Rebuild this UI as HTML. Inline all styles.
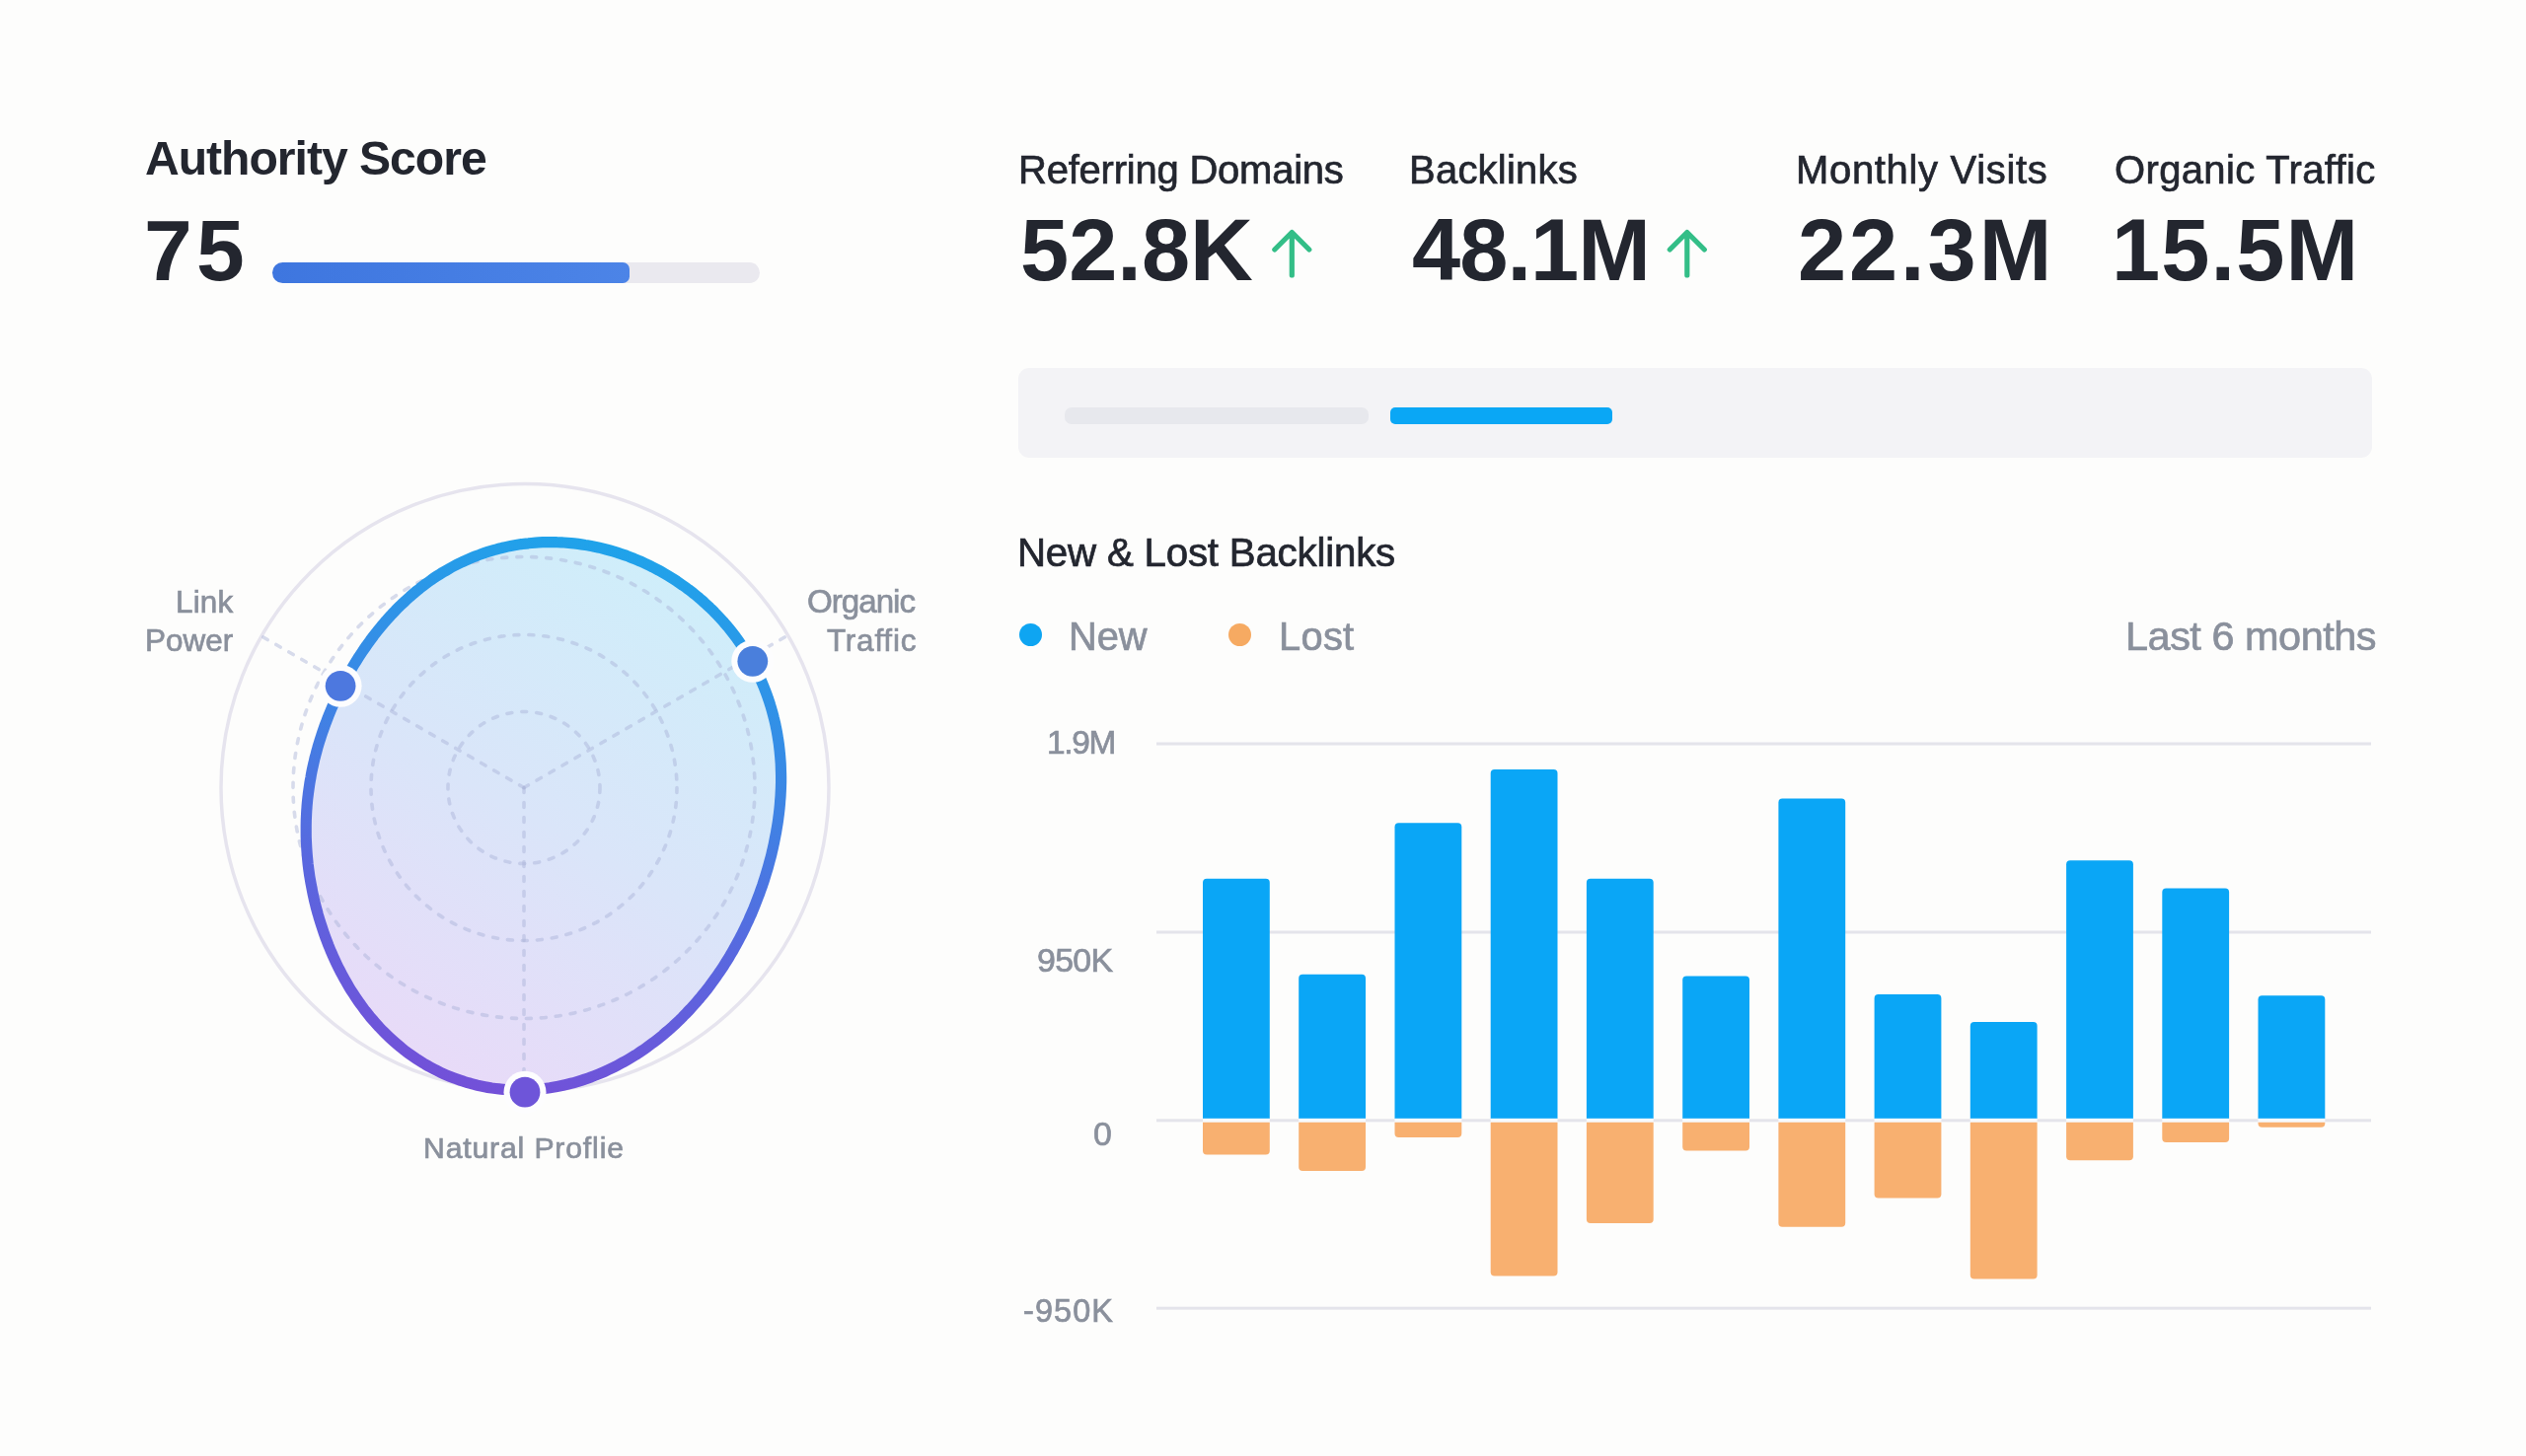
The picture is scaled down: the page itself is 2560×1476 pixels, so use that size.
<!DOCTYPE html>
<html><head><meta charset="utf-8"><style>
html,body{margin:0;padding:0}
body{width:2560px;height:1476px;position:relative;overflow:hidden;background:#fdfdfc;font-family:"Liberation Sans",sans-serif}
.t{position:absolute;white-space:nowrap;font-family:"Liberation Sans",sans-serif;will-change:transform}
.r{position:absolute}
</style></head><body>
<div class="t" style="left:146.5px;top:136.3px;font-size:48.13px;line-height:48.13px;font-weight:700;letter-spacing:-1.02px;color:#23262f">Authority Score</div>
<div class="t" style="left:145.5px;top:210.5px;font-size:87.65px;line-height:87.65px;font-weight:700;letter-spacing:4.29px;color:#23262f">75</div>
<div class="t" style="left:1032.0px;top:151.7px;font-size:39.98px;line-height:39.98px;font-weight:400;letter-spacing:-0.21px;color:#23262f;-webkit-text-stroke:0.7px #23262f">Referring Domains</div>
<div class="t" style="left:1034.0px;top:210.4px;font-size:88.38px;line-height:88.38px;font-weight:700;letter-spacing:0.03px;color:#23262f">52.8K</div>
<div class="t" style="left:1427.5px;top:151.7px;font-size:39.98px;line-height:39.98px;font-weight:400;letter-spacing:0.25px;color:#23262f;-webkit-text-stroke:0.7px #23262f">Backlinks</div>
<div class="t" style="left:1431.0px;top:210.4px;font-size:88.38px;line-height:88.38px;font-weight:700;letter-spacing:-0.95px;color:#23262f">48.1M</div>
<div class="t" style="left:1820.0px;top:151.7px;font-size:39.98px;line-height:39.98px;font-weight:400;letter-spacing:0.69px;color:#23262f;-webkit-text-stroke:0.7px #23262f">Monthly Visits</div>
<div class="t" style="left:1822.0px;top:210.4px;font-size:88.38px;line-height:88.38px;font-weight:700;letter-spacing:2.91px;color:#23262f">22.3M</div>
<div class="t" style="left:2143.0px;top:151.7px;font-size:39.98px;line-height:39.98px;font-weight:400;letter-spacing:0.37px;color:#23262f;-webkit-text-stroke:0.7px #23262f">Organic Traffic</div>
<div class="t" style="left:2140.0px;top:210.4px;font-size:88.38px;line-height:88.38px;font-weight:700;letter-spacing:1.12px;color:#23262f">15.5M</div>
<div class="t" style="left:1031.0px;top:540.7px;font-size:40.26px;line-height:40.26px;font-weight:400;letter-spacing:-0.20px;color:#23262f;-webkit-text-stroke:0.7px #23262f">New &amp; Lost Backlinks</div>
<div class="t" style="left:1083.0px;top:625.8px;font-size:39.83px;line-height:39.83px;font-weight:400;letter-spacing:-0.08px;color:#8a909c;-webkit-text-stroke:0.7px #8a909c">New</div>
<div class="t" style="left:1296.0px;top:625.8px;font-size:39.83px;line-height:39.83px;font-weight:400;letter-spacing:0.30px;color:#8a909c;-webkit-text-stroke:0.7px #8a909c">Lost</div>
<div class="t" style="left:2154.0px;top:623.9px;font-size:41.44px;line-height:41.44px;font-weight:400;letter-spacing:-0.48px;color:#8a909c;-webkit-text-stroke:0.7px #8a909c">Last 6 months</div>
<div class="t" style="left:1060.5px;top:735.7px;font-size:33.43px;line-height:33.43px;font-weight:400;letter-spacing:-1.31px;color:#8a909c;-webkit-text-stroke:0.7px #8a909c">1.9M</div>
<div class="t" style="left:1050.5px;top:956.6px;font-size:33.87px;line-height:33.87px;font-weight:400;letter-spacing:-0.67px;color:#8a909c;-webkit-text-stroke:0.7px #8a909c">950K</div>
<div class="t" style="left:1108.0px;top:1132.6px;font-size:33.87px;line-height:33.87px;font-weight:400;letter-spacing:0.00px;color:#8a909c;-webkit-text-stroke:0.7px #8a909c">0</div>
<div class="t" style="left:1036.5px;top:1312.8px;font-size:32.41px;line-height:32.41px;font-weight:400;letter-spacing:1.11px;color:#8a909c;-webkit-text-stroke:0.7px #8a909c">-950K</div>
<div class="t" style="left:177.5px;top:594.7px;font-size:31.43px;line-height:31.43px;font-weight:400;letter-spacing:0.16px;color:#8a909c;-webkit-text-stroke:0.7px #8a909c">Link</div>
<div class="t" style="left:147.0px;top:633.7px;font-size:31.43px;line-height:31.43px;font-weight:400;letter-spacing:0.05px;color:#8a909c;-webkit-text-stroke:0.7px #8a909c">Power</div>
<div class="t" style="left:818.0px;top:593.2px;font-size:33.16px;line-height:33.16px;font-weight:400;letter-spacing:-1.01px;color:#8a909c;-webkit-text-stroke:0.7px #8a909c">Organic</div>
<div class="t" style="left:838.0px;top:633.7px;font-size:31.43px;line-height:31.43px;font-weight:400;letter-spacing:0.81px;color:#8a909c;-webkit-text-stroke:0.7px #8a909c">Traffic</div>
<div class="t" style="left:428.5px;top:1149.3px;font-size:30.16px;line-height:30.16px;font-weight:400;letter-spacing:0.85px;color:#8a909c;-webkit-text-stroke:0.7px #8a909c">Natural Proflie</div>
<div class="r" style="left:276px;top:265.5px;width:493.5px;height:21.8px;border-radius:10.9px;background:#eae9ef"></div>
<div class="r" style="left:276px;top:265.5px;width:362.3px;height:21.8px;border-radius:10.9px 7px 7px 10.9px;background:linear-gradient(90deg,#3e76df,#4c84e7)"></div>
<svg class="r" style="left:0px;top:0px;overflow:visible" width="1" height="1"><path d="M1309.3 279.0 L1309.3 235.5 M1291.8 253.0 L1309.3 235.5 L1326.8 253.0" stroke="#33be87" stroke-width="5.2" fill="none" stroke-linecap="round" stroke-linejoin="round"/></svg>
<svg class="r" style="left:0px;top:0px;overflow:visible" width="1" height="1"><path d="M1709.8 279.0 L1709.8 235.5 M1692.3 253.0 L1709.8 235.5 L1727.3 253.0" stroke="#33be87" stroke-width="5.2" fill="none" stroke-linecap="round" stroke-linejoin="round"/></svg>
<div class="r" style="left:1032px;top:373px;width:1372px;height:91px;border-radius:11px;background:#f3f3f6"></div>
<div class="r" style="left:1079px;top:413.2px;width:307.7px;height:16.4px;border-radius:7px;background:#e7e8ed"></div>
<div class="r" style="left:1409.2px;top:412.9px;width:224.8px;height:16.9px;border-radius:5px;background:#0aa7f5"></div>
<div class="r" style="left:1032.5px;top:631.5px;width:23px;height:23px;border-radius:50%;background:#0ea5f2"></div>
<div class="r" style="left:1244.5px;top:631.5px;width:23px;height:23px;border-radius:50%;background:#f6aa62"></div>
<svg class="r" style="left:0;top:0" width="2560" height="1476" viewBox="0 0 2560 1476"><rect x="1172" y="752.5" width="1231" height="3" fill="#e4e4eb"/><rect x="1172" y="943.5" width="1231" height="3" fill="#e4e4eb"/><rect x="1172" y="1134.3" width="1231" height="3" fill="#e4e4eb"/><rect x="1172" y="1324.7" width="1231" height="3" fill="#e4e4eb"/><path d="M1219.0 1134 V894.8 Q1219.0 890.8 1223.0 890.8 H1282.8 Q1286.8 890.8 1286.8 894.8 V1134Z" fill="#0aa6f6"/><rect x="1219.0" y="1133.8" width="67.8" height="4" fill="#f7fafd"/><path d="M1219.0 1137.8 V1166.4 Q1219.0 1170.4 1223.0 1170.4 H1282.8 Q1286.8 1170.4 1286.8 1166.4 V1137.8Z" fill="#f8b070"/><path d="M1316.2 1134 V991.7 Q1316.2 987.7 1320.2 987.7 H1380.0 Q1384.0 987.7 1384.0 991.7 V1134Z" fill="#0aa6f6"/><rect x="1316.2" y="1133.8" width="67.8" height="4" fill="#f7fafd"/><path d="M1316.2 1137.8 V1183.0 Q1316.2 1187.0 1320.2 1187.0 H1380.0 Q1384.0 1187.0 1384.0 1183.0 V1137.8Z" fill="#f8b070"/><path d="M1413.5 1134 V838.2 Q1413.5 834.2 1417.5 834.2 H1477.3 Q1481.3 834.2 1481.3 838.2 V1134Z" fill="#0aa6f6"/><rect x="1413.5" y="1133.8" width="67.8" height="4" fill="#f7fafd"/><path d="M1413.5 1137.8 V1149.0 Q1413.5 1153.0 1417.5 1153.0 H1477.3 Q1481.3 1153.0 1481.3 1149.0 V1137.8Z" fill="#f8b070"/><path d="M1510.7 1134 V784.0 Q1510.7 780.0 1514.7 780.0 H1574.5 Q1578.5 780.0 1578.5 784.0 V1134Z" fill="#0aa6f6"/><rect x="1510.7" y="1133.8" width="67.8" height="4" fill="#f7fafd"/><path d="M1510.7 1137.8 V1289.5 Q1510.7 1293.5 1514.7 1293.5 H1574.5 Q1578.5 1293.5 1578.5 1289.5 V1137.8Z" fill="#f8b070"/><path d="M1607.9 1134 V894.8 Q1607.9 890.8 1611.9 890.8 H1671.7 Q1675.7 890.8 1675.7 894.8 V1134Z" fill="#0aa6f6"/><rect x="1607.9" y="1133.8" width="67.8" height="4" fill="#f7fafd"/><path d="M1607.9 1137.8 V1236.0 Q1607.9 1240.0 1611.9 1240.0 H1671.7 Q1675.7 1240.0 1675.7 1236.0 V1137.8Z" fill="#f8b070"/><path d="M1705.2 1134 V993.6 Q1705.2 989.6 1709.2 989.6 H1769.0 Q1773.0 989.6 1773.0 993.6 V1134Z" fill="#0aa6f6"/><rect x="1705.2" y="1133.8" width="67.8" height="4" fill="#f7fafd"/><path d="M1705.2 1137.8 V1162.5 Q1705.2 1166.5 1709.2 1166.5 H1769.0 Q1773.0 1166.5 1773.0 1162.5 V1137.8Z" fill="#f8b070"/><path d="M1802.4 1134 V813.6 Q1802.4 809.6 1806.4 809.6 H1866.2 Q1870.2 809.6 1870.2 813.6 V1134Z" fill="#0aa6f6"/><rect x="1802.4" y="1133.8" width="67.8" height="4" fill="#f7fafd"/><path d="M1802.4 1137.8 V1239.8 Q1802.4 1243.8 1806.4 1243.8 H1866.2 Q1870.2 1243.8 1870.2 1239.8 V1137.8Z" fill="#f8b070"/><path d="M1899.6 1134 V1012.0 Q1899.6 1008.0 1903.6 1008.0 H1963.4 Q1967.4 1008.0 1967.4 1012.0 V1134Z" fill="#0aa6f6"/><rect x="1899.6" y="1133.8" width="67.8" height="4" fill="#f7fafd"/><path d="M1899.6 1137.8 V1210.6 Q1899.6 1214.6 1903.6 1214.6 H1963.4 Q1967.4 1214.6 1967.4 1210.6 V1137.8Z" fill="#f8b070"/><path d="M1996.8 1134 V1040.0 Q1996.8 1036.0 2000.8 1036.0 H2060.6 Q2064.6 1036.0 2064.6 1040.0 V1134Z" fill="#0aa6f6"/><rect x="1996.8" y="1133.8" width="67.8" height="4" fill="#f7fafd"/><path d="M1996.8 1137.8 V1292.5 Q1996.8 1296.5 2000.8 1296.5 H2060.6 Q2064.6 1296.5 2064.6 1292.5 V1137.8Z" fill="#f8b070"/><path d="M2094.1 1134 V876.3 Q2094.1 872.3 2098.1 872.3 H2157.9 Q2161.9 872.3 2161.9 876.3 V1134Z" fill="#0aa6f6"/><rect x="2094.1" y="1133.8" width="67.8" height="4" fill="#f7fafd"/><path d="M2094.1 1137.8 V1172.2 Q2094.1 1176.2 2098.1 1176.2 H2157.9 Q2161.9 1176.2 2161.9 1172.2 V1137.8Z" fill="#f8b070"/><path d="M2191.3 1134 V904.4 Q2191.3 900.4 2195.3 900.4 H2255.1 Q2259.1 900.4 2259.1 904.4 V1134Z" fill="#0aa6f6"/><rect x="2191.3" y="1133.8" width="67.8" height="4" fill="#f7fafd"/><path d="M2191.3 1137.8 V1154.0 Q2191.3 1158.0 2195.3 1158.0 H2255.1 Q2259.1 1158.0 2259.1 1154.0 V1137.8Z" fill="#f8b070"/><path d="M2288.5 1134 V1013.2 Q2288.5 1009.2 2292.5 1009.2 H2352.3 Q2356.3 1009.2 2356.3 1013.2 V1134Z" fill="#0aa6f6"/><rect x="2288.5" y="1133.8" width="67.8" height="4" fill="#f7fafd"/><path d="M2288.5 1137.8 V1138.7 Q2288.5 1142.7 2292.5 1142.7 H2352.3 Q2356.3 1142.7 2356.3 1138.7 V1137.8Z" fill="#f8b070"/><defs><linearGradient id="gf" x1="680" y1="580" x2="400" y2="1080" gradientUnits="userSpaceOnUse"><stop offset="0" stop-color="#cfeefa"/><stop offset="0.5" stop-color="#dae5f9"/><stop offset="1" stop-color="#e9daf8"/></linearGradient><linearGradient id="gs" x1="600" y1="545" x2="470" y2="1105" gradientUnits="userSpaceOnUse"><stop offset="0" stop-color="#1fa3ea"/><stop offset="0.35" stop-color="#3a88e5"/><stop offset="0.66" stop-color="#5868df"/><stop offset="1" stop-color="#7350d8"/></linearGradient></defs><circle cx="532.0" cy="798.5" r="308" fill="none" stroke="#e6e4ee" stroke-width="3.5"/><path d="M310.6 825.0 C310.7 822.9 310.8 820.8 311.0 818.7 C311.1 816.7 311.3 814.6 311.5 812.5 C311.7 810.4 311.9 808.4 312.2 806.3 C312.4 804.2 312.7 802.1 313.0 800.1 C313.3 798.0 313.6 796.0 313.9 793.9 C314.2 791.9 314.6 789.8 315.0 787.8 C315.3 785.7 315.7 783.7 316.1 781.7 C316.5 779.6 317.0 777.6 317.4 775.6 C317.9 773.5 318.4 771.5 318.8 769.5 C319.3 767.5 319.9 765.5 320.4 763.5 C320.9 761.5 321.5 759.5 322.0 757.5 C322.6 755.5 323.2 753.5 323.8 751.5 C324.4 749.5 325.1 747.5 325.7 745.6 C326.4 743.6 327.0 741.6 327.7 739.7 C328.4 737.7 329.1 735.8 329.8 733.8 C330.6 731.9 331.3 729.9 332.1 728.0 C332.8 726.0 333.6 724.1 334.4 722.2 C335.2 720.2 336.0 718.3 336.8 716.4 C337.7 714.5 338.5 712.6 339.4 710.6 C340.2 708.7 341.1 706.8 342.0 704.9 C342.9 703.0 343.9 701.1 344.8 699.3 C345.7 697.4 346.7 695.5 347.7 693.6 C348.7 691.7 349.6 689.9 350.7 688.0 C351.7 686.1 352.7 684.3 353.8 682.4 C354.8 680.6 355.9 678.7 357.0 676.9 C358.0 675.0 359.2 673.2 360.3 671.4 C361.4 669.5 362.6 667.7 363.7 665.9 C364.9 664.1 366.1 662.3 367.3 660.5 C368.5 658.7 369.7 656.9 371.0 655.1 C372.2 653.3 373.5 651.5 374.8 649.8 C376.1 648.0 377.4 646.3 378.7 644.5 C380.1 642.8 381.4 641.0 382.8 639.3 C384.2 637.6 385.6 635.9 387.0 634.1 C388.4 632.4 389.9 630.8 391.3 629.1 C392.8 627.4 394.3 625.7 395.8 624.1 C397.3 622.4 398.9 620.8 400.5 619.2 C402.0 617.6 403.6 615.9 405.2 614.4 C406.8 612.8 408.5 611.2 410.2 609.7 C411.8 608.1 413.5 606.6 415.2 605.1 C416.9 603.5 418.7 602.0 420.4 600.6 C422.2 599.1 424.0 597.7 425.8 596.2 C427.6 594.8 429.4 593.4 431.3 592.0 C433.2 590.6 435.0 589.3 436.9 588.0 C438.8 586.6 440.8 585.3 442.7 584.1 C444.7 582.8 446.7 581.6 448.7 580.3 C450.7 579.1 452.7 577.9 454.7 576.8 C456.8 575.6 458.8 574.5 460.9 573.4 C463.0 572.3 465.1 571.3 467.2 570.3 C469.4 569.2 471.5 568.3 473.7 567.3 C475.8 566.3 478.0 565.4 480.2 564.5 C482.4 563.7 484.6 562.8 486.9 562.0 C489.1 561.2 491.3 560.4 493.6 559.7 C495.9 559.0 498.2 558.3 500.4 557.6 C502.7 557.0 505.0 556.3 507.4 555.8 C509.7 555.2 512.0 554.6 514.3 554.1 C516.7 553.6 519.0 553.2 521.4 552.8 C523.7 552.4 526.1 552.0 528.5 551.6 C530.9 551.3 533.2 551.0 535.6 550.8 C538.0 550.5 540.4 550.3 542.8 550.1 C545.2 549.9 547.6 549.8 550.0 549.7 C552.4 549.6 554.8 549.6 557.2 549.6 C559.6 549.6 562.0 549.6 564.4 549.7 C566.8 549.7 569.2 549.9 571.6 550.0 C574.0 550.2 576.4 550.4 578.8 550.6 C581.2 550.8 583.6 551.1 586.0 551.4 C588.4 551.7 590.8 552.1 593.2 552.5 C595.5 552.8 597.9 553.3 600.3 553.7 C602.6 554.2 605.0 554.7 607.3 555.2 C609.7 555.8 612.0 556.4 614.3 557.0 C616.7 557.6 619.0 558.2 621.3 558.9 C623.6 559.6 625.9 560.3 628.2 561.1 C630.5 561.8 632.7 562.6 635.0 563.4 C637.2 564.3 639.5 565.1 641.7 566.0 C643.9 566.9 646.2 567.8 648.4 568.8 C650.6 569.7 652.7 570.7 654.9 571.7 C657.1 572.8 659.2 573.8 661.4 574.9 C663.5 576.0 665.6 577.1 667.7 578.2 C669.8 579.4 671.9 580.6 673.9 581.8 C676.0 583.0 678.0 584.2 680.1 585.5 C682.1 586.7 684.1 588.0 686.1 589.3 C688.0 590.6 690.0 592.0 691.9 593.4 C693.9 594.7 695.8 596.1 697.7 597.6 C699.6 599.0 701.5 600.4 703.3 601.9 C705.2 603.4 707.0 604.9 708.8 606.4 C710.6 608.0 712.4 609.5 714.1 611.1 C715.9 612.7 717.6 614.3 719.3 615.9 C721.0 617.6 722.7 619.2 724.3 620.9 C726.0 622.6 727.6 624.3 729.2 626.0 C730.8 627.7 732.4 629.4 733.9 631.2 C735.5 633.0 737.0 634.7 738.5 636.5 C739.9 638.3 741.4 640.2 742.8 642.0 C744.3 643.9 745.7 645.7 747.0 647.6 C748.4 649.5 749.7 651.4 751.0 653.3 C752.3 655.2 753.6 657.2 754.9 659.1 C756.1 661.1 757.3 663.0 758.5 665.0 C759.7 667.0 760.8 669.0 762.0 671.0 C763.1 673.0 764.2 675.0 765.2 677.1 C766.3 679.1 767.3 681.2 768.3 683.2 C769.3 685.3 770.3 687.4 771.2 689.5 C772.1 691.5 773.0 693.6 773.9 695.8 C774.7 697.9 775.5 700.0 776.3 702.1 C777.1 704.2 777.9 706.4 778.6 708.5 C779.4 710.6 780.1 712.8 780.7 714.9 C781.4 717.1 782.0 719.3 782.6 721.4 C783.2 723.6 783.8 725.8 784.3 727.9 C784.9 730.1 785.4 732.3 785.9 734.5 C786.3 736.6 786.8 738.8 787.2 741.0 C787.6 743.2 788.0 745.4 788.3 747.6 C788.7 749.7 789.0 751.9 789.3 754.1 C789.6 756.3 789.8 758.5 790.1 760.7 C790.3 762.9 790.5 765.0 790.7 767.2 C790.9 769.4 791.0 771.6 791.2 773.7 C791.3 775.9 791.4 778.1 791.4 780.3 C791.5 782.4 791.6 784.6 791.6 786.7 C791.6 788.9 791.6 791.1 791.6 793.2 C791.5 795.3 791.5 797.5 791.4 799.6 C791.3 801.8 791.2 803.9 791.1 806.0 C791.0 808.2 790.8 810.3 790.6 812.4 C790.5 814.5 790.3 816.6 790.1 818.7 C789.9 820.8 789.6 822.9 789.4 825.0 C789.1 827.1 788.8 829.2 788.6 831.2 C788.3 833.3 788.0 835.4 787.6 837.5 C787.3 839.5 786.9 841.6 786.6 843.6 C786.2 845.7 785.8 847.7 785.4 849.7 C785.0 851.8 784.6 853.8 784.2 855.8 C783.7 857.9 783.3 859.9 782.8 861.9 C782.3 863.9 781.9 865.9 781.4 867.9 C780.9 869.9 780.3 871.9 779.8 873.8 C779.3 875.8 778.7 877.8 778.2 879.8 C777.6 881.7 777.0 883.7 776.4 885.7 C775.8 887.6 775.2 889.6 774.6 891.5 C774.0 893.5 773.3 895.4 772.7 897.3 C772.0 899.3 771.3 901.2 770.6 903.1 C770.0 905.1 769.3 907.0 768.5 908.9 C767.8 910.8 767.1 912.7 766.3 914.6 C765.6 916.5 764.8 918.4 764.1 920.3 C763.3 922.2 762.5 924.1 761.7 926.0 C760.9 927.8 760.0 929.7 759.2 931.6 C758.4 933.5 757.5 935.3 756.6 937.2 C755.7 939.0 754.9 940.9 753.9 942.8 C753.0 944.6 752.1 946.4 751.2 948.3 C750.2 950.1 749.3 952.0 748.3 953.8 C747.3 955.6 746.3 957.4 745.3 959.2 C744.3 961.1 743.3 962.9 742.3 964.7 C741.2 966.5 740.1 968.3 739.1 970.1 C738.0 971.9 736.9 973.6 735.8 975.4 C734.6 977.2 733.5 979.0 732.4 980.7 C731.2 982.5 730.0 984.3 728.8 986.0 C727.6 987.8 726.4 989.5 725.2 991.2 C724.0 993.0 722.7 994.7 721.4 996.4 C720.2 998.2 718.9 999.9 717.6 1001.6 C716.2 1003.3 714.9 1005.0 713.6 1006.6 C712.2 1008.3 710.8 1010.0 709.4 1011.7 C708.0 1013.3 706.6 1015.0 705.2 1016.6 C703.7 1018.3 702.3 1019.9 700.8 1021.5 C699.3 1023.1 697.8 1024.8 696.3 1026.3 C694.8 1027.9 693.2 1029.5 691.7 1031.1 C690.1 1032.7 688.5 1034.2 686.9 1035.8 C685.3 1037.3 683.6 1038.9 682.0 1040.4 C680.3 1041.9 678.6 1043.4 676.9 1044.9 C675.2 1046.3 673.5 1047.8 671.8 1049.3 C670.0 1050.7 668.2 1052.1 666.5 1053.6 C664.7 1055.0 662.9 1056.4 661.0 1057.7 C659.2 1059.1 657.3 1060.5 655.4 1061.8 C653.6 1063.2 651.7 1064.5 649.7 1065.8 C647.8 1067.0 645.9 1068.3 643.9 1069.6 C641.9 1070.8 639.9 1072.0 637.9 1073.2 C635.9 1074.4 633.9 1075.6 631.8 1076.7 C629.7 1077.9 627.7 1079.0 625.6 1080.1 C623.5 1081.2 621.3 1082.3 619.2 1083.3 C617.1 1084.3 614.9 1085.3 612.7 1086.3 C610.6 1087.3 608.4 1088.2 606.1 1089.1 C603.9 1090.0 601.7 1090.9 599.4 1091.7 C597.2 1092.6 594.9 1093.4 592.6 1094.1 C590.3 1094.9 588.0 1095.6 585.7 1096.3 C583.4 1097.0 581.1 1097.7 578.7 1098.3 C576.4 1098.9 574.0 1099.5 571.6 1100.0 C569.3 1100.6 566.9 1101.1 564.5 1101.5 C562.1 1102.0 559.7 1102.4 557.3 1102.8 C554.9 1103.1 552.4 1103.5 550.0 1103.8 C547.6 1104.0 545.1 1104.3 542.7 1104.5 C540.2 1104.7 537.8 1104.8 535.3 1104.9 C532.9 1105.0 530.4 1105.1 528.0 1105.1 C525.5 1105.1 523.0 1105.1 520.6 1105.0 C518.1 1104.9 515.6 1104.8 513.2 1104.6 C510.7 1104.4 508.3 1104.2 505.8 1103.9 C503.4 1103.6 500.9 1103.3 498.5 1103.0 C496.0 1102.6 493.6 1102.2 491.2 1101.7 C488.8 1101.2 486.3 1100.7 483.9 1100.2 C481.5 1099.6 479.1 1099.0 476.8 1098.3 C474.4 1097.7 472.0 1097.0 469.7 1096.2 C467.3 1095.5 465.0 1094.7 462.6 1093.8 C460.3 1093.0 458.0 1092.1 455.7 1091.2 C453.5 1090.3 451.2 1089.3 448.9 1088.3 C446.7 1087.2 444.5 1086.2 442.3 1085.1 C440.1 1084.0 437.9 1082.8 435.7 1081.6 C433.6 1080.5 431.4 1079.2 429.3 1078.0 C427.2 1076.7 425.2 1075.4 423.1 1074.1 C421.0 1072.7 419.0 1071.3 417.0 1069.9 C415.0 1068.5 413.0 1067.1 411.1 1065.6 C409.2 1064.1 407.2 1062.6 405.4 1061.0 C403.5 1059.5 401.6 1057.9 399.8 1056.3 C398.0 1054.7 396.2 1053.1 394.4 1051.4 C392.6 1049.7 390.9 1048.0 389.2 1046.3 C387.5 1044.6 385.8 1042.9 384.2 1041.1 C382.5 1039.3 380.9 1037.6 379.3 1035.7 C377.8 1033.9 376.2 1032.1 374.7 1030.3 C373.2 1028.4 371.7 1026.5 370.2 1024.7 C368.8 1022.8 367.4 1020.9 366.0 1018.9 C364.6 1017.0 363.2 1015.1 361.9 1013.1 C360.5 1011.2 359.2 1009.2 358.0 1007.2 C356.7 1005.3 355.4 1003.3 354.2 1001.3 C353.0 999.3 351.8 997.3 350.7 995.2 C349.5 993.2 348.4 991.2 347.3 989.1 C346.2 987.1 345.1 985.1 344.1 983.0 C343.0 981.0 342.0 978.9 341.0 976.8 C340.0 974.8 339.1 972.7 338.1 970.6 C337.2 968.5 336.3 966.4 335.4 964.4 C334.5 962.3 333.7 960.2 332.8 958.1 C332.0 956.0 331.2 953.9 330.4 951.8 C329.6 949.7 328.9 947.6 328.1 945.5 C327.4 943.4 326.7 941.2 326.0 939.1 C325.3 937.0 324.6 934.9 324.0 932.8 C323.4 930.7 322.7 928.6 322.1 926.4 C321.6 924.3 321.0 922.2 320.4 920.1 C319.9 918.0 319.4 915.9 318.8 913.7 C318.3 911.6 317.9 909.5 317.4 907.4 C316.9 905.2 316.5 903.1 316.1 901.0 C315.7 898.9 315.3 896.8 314.9 894.6 C314.5 892.5 314.2 890.4 313.8 888.3 C313.5 886.2 313.2 884.0 312.9 881.9 C312.6 879.8 312.4 877.7 312.1 875.6 C311.9 873.4 311.7 871.3 311.5 869.2 C311.3 867.1 311.1 865.0 311.0 862.9 C310.8 860.7 310.7 858.6 310.6 856.5 C310.5 854.4 310.4 852.3 310.3 850.2 C310.2 848.1 310.2 846.0 310.2 843.9 C310.2 841.8 310.2 839.7 310.2 837.6 C310.2 835.5 310.3 833.4 310.3 831.3 C310.4 829.2 310.5 827.1 310.6 825.0Z" fill="url(#gf)"/><circle cx="531.0" cy="798.5" r="77" stroke="#a8b2d8" stroke-opacity="0.45" stroke-width="3.6" stroke-dasharray="5 10" stroke-linecap="round" fill="none"/><circle cx="531.0" cy="798.5" r="155" stroke="#a8b2d8" stroke-opacity="0.45" stroke-width="3.6" stroke-dasharray="5 10" stroke-linecap="round" fill="none"/><circle cx="531.0" cy="798.5" r="234" stroke="#a8b2d8" stroke-opacity="0.45" stroke-width="3.6" stroke-dasharray="5 10" stroke-linecap="round" fill="none"/><line x1="531.0" y1="798.5" x2="531.0" y2="1098.5" stroke="#a8b2d8" stroke-opacity="0.45" stroke-width="3.6" stroke-dasharray="5 10" stroke-linecap="round" fill="none"/><line x1="531.0" y1="798.5" x2="266.0" y2="645.5" stroke="#a8b2d8" stroke-opacity="0.45" stroke-width="3.6" stroke-dasharray="5 10" stroke-linecap="round" fill="none"/><line x1="531.0" y1="798.5" x2="796.0" y2="645.5" stroke="#a8b2d8" stroke-opacity="0.45" stroke-width="3.6" stroke-dasharray="5 10" stroke-linecap="round" fill="none"/><path d="M310.6 825.0 C310.7 822.9 310.8 820.8 311.0 818.7 C311.1 816.7 311.3 814.6 311.5 812.5 C311.7 810.4 311.9 808.4 312.2 806.3 C312.4 804.2 312.7 802.1 313.0 800.1 C313.3 798.0 313.6 796.0 313.9 793.9 C314.2 791.9 314.6 789.8 315.0 787.8 C315.3 785.7 315.7 783.7 316.1 781.7 C316.5 779.6 317.0 777.6 317.4 775.6 C317.9 773.5 318.4 771.5 318.8 769.5 C319.3 767.5 319.9 765.5 320.4 763.5 C320.9 761.5 321.5 759.5 322.0 757.5 C322.6 755.5 323.2 753.5 323.8 751.5 C324.4 749.5 325.1 747.5 325.7 745.6 C326.4 743.6 327.0 741.6 327.7 739.7 C328.4 737.7 329.1 735.8 329.8 733.8 C330.6 731.9 331.3 729.9 332.1 728.0 C332.8 726.0 333.6 724.1 334.4 722.2 C335.2 720.2 336.0 718.3 336.8 716.4 C337.7 714.5 338.5 712.6 339.4 710.6 C340.2 708.7 341.1 706.8 342.0 704.9 C342.9 703.0 343.9 701.1 344.8 699.3 C345.7 697.4 346.7 695.5 347.7 693.6 C348.7 691.7 349.6 689.9 350.7 688.0 C351.7 686.1 352.7 684.3 353.8 682.4 C354.8 680.6 355.9 678.7 357.0 676.9 C358.0 675.0 359.2 673.2 360.3 671.4 C361.4 669.5 362.6 667.7 363.7 665.9 C364.9 664.1 366.1 662.3 367.3 660.5 C368.5 658.7 369.7 656.9 371.0 655.1 C372.2 653.3 373.5 651.5 374.8 649.8 C376.1 648.0 377.4 646.3 378.7 644.5 C380.1 642.8 381.4 641.0 382.8 639.3 C384.2 637.6 385.6 635.9 387.0 634.1 C388.4 632.4 389.9 630.8 391.3 629.1 C392.8 627.4 394.3 625.7 395.8 624.1 C397.3 622.4 398.9 620.8 400.5 619.2 C402.0 617.6 403.6 615.9 405.2 614.4 C406.8 612.8 408.5 611.2 410.2 609.7 C411.8 608.1 413.5 606.6 415.2 605.1 C416.9 603.5 418.7 602.0 420.4 600.6 C422.2 599.1 424.0 597.7 425.8 596.2 C427.6 594.8 429.4 593.4 431.3 592.0 C433.2 590.6 435.0 589.3 436.9 588.0 C438.8 586.6 440.8 585.3 442.7 584.1 C444.7 582.8 446.7 581.6 448.7 580.3 C450.7 579.1 452.7 577.9 454.7 576.8 C456.8 575.6 458.8 574.5 460.9 573.4 C463.0 572.3 465.1 571.3 467.2 570.3 C469.4 569.2 471.5 568.3 473.7 567.3 C475.8 566.3 478.0 565.4 480.2 564.5 C482.4 563.7 484.6 562.8 486.9 562.0 C489.1 561.2 491.3 560.4 493.6 559.7 C495.9 559.0 498.2 558.3 500.4 557.6 C502.7 557.0 505.0 556.3 507.4 555.8 C509.7 555.2 512.0 554.6 514.3 554.1 C516.7 553.6 519.0 553.2 521.4 552.8 C523.7 552.4 526.1 552.0 528.5 551.6 C530.9 551.3 533.2 551.0 535.6 550.8 C538.0 550.5 540.4 550.3 542.8 550.1 C545.2 549.9 547.6 549.8 550.0 549.7 C552.4 549.6 554.8 549.6 557.2 549.6 C559.6 549.6 562.0 549.6 564.4 549.7 C566.8 549.7 569.2 549.9 571.6 550.0 C574.0 550.2 576.4 550.4 578.8 550.6 C581.2 550.8 583.6 551.1 586.0 551.4 C588.4 551.7 590.8 552.1 593.2 552.5 C595.5 552.8 597.9 553.3 600.3 553.7 C602.6 554.2 605.0 554.7 607.3 555.2 C609.7 555.8 612.0 556.4 614.3 557.0 C616.7 557.6 619.0 558.2 621.3 558.9 C623.6 559.6 625.9 560.3 628.2 561.1 C630.5 561.8 632.7 562.6 635.0 563.4 C637.2 564.3 639.5 565.1 641.7 566.0 C643.9 566.9 646.2 567.8 648.4 568.8 C650.6 569.7 652.7 570.7 654.9 571.7 C657.1 572.8 659.2 573.8 661.4 574.9 C663.5 576.0 665.6 577.1 667.7 578.2 C669.8 579.4 671.9 580.6 673.9 581.8 C676.0 583.0 678.0 584.2 680.1 585.5 C682.1 586.7 684.1 588.0 686.1 589.3 C688.0 590.6 690.0 592.0 691.9 593.4 C693.9 594.7 695.8 596.1 697.7 597.6 C699.6 599.0 701.5 600.4 703.3 601.9 C705.2 603.4 707.0 604.9 708.8 606.4 C710.6 608.0 712.4 609.5 714.1 611.1 C715.9 612.7 717.6 614.3 719.3 615.9 C721.0 617.6 722.7 619.2 724.3 620.9 C726.0 622.6 727.6 624.3 729.2 626.0 C730.8 627.7 732.4 629.4 733.9 631.2 C735.5 633.0 737.0 634.7 738.5 636.5 C739.9 638.3 741.4 640.2 742.8 642.0 C744.3 643.9 745.7 645.7 747.0 647.6 C748.4 649.5 749.7 651.4 751.0 653.3 C752.3 655.2 753.6 657.2 754.9 659.1 C756.1 661.1 757.3 663.0 758.5 665.0 C759.7 667.0 760.8 669.0 762.0 671.0 C763.1 673.0 764.2 675.0 765.2 677.1 C766.3 679.1 767.3 681.2 768.3 683.2 C769.3 685.3 770.3 687.4 771.2 689.5 C772.1 691.5 773.0 693.6 773.9 695.8 C774.7 697.9 775.5 700.0 776.3 702.1 C777.1 704.2 777.9 706.4 778.6 708.5 C779.4 710.6 780.1 712.8 780.7 714.9 C781.4 717.1 782.0 719.3 782.6 721.4 C783.2 723.6 783.8 725.8 784.3 727.9 C784.9 730.1 785.4 732.3 785.9 734.5 C786.3 736.6 786.8 738.8 787.2 741.0 C787.6 743.2 788.0 745.4 788.3 747.6 C788.7 749.7 789.0 751.9 789.3 754.1 C789.6 756.3 789.8 758.5 790.1 760.7 C790.3 762.9 790.5 765.0 790.7 767.2 C790.9 769.4 791.0 771.6 791.2 773.7 C791.3 775.9 791.4 778.1 791.4 780.3 C791.5 782.4 791.6 784.6 791.6 786.7 C791.6 788.9 791.6 791.1 791.6 793.2 C791.5 795.3 791.5 797.5 791.4 799.6 C791.3 801.8 791.2 803.9 791.1 806.0 C791.0 808.2 790.8 810.3 790.6 812.4 C790.5 814.5 790.3 816.6 790.1 818.7 C789.9 820.8 789.6 822.9 789.4 825.0 C789.1 827.1 788.8 829.2 788.6 831.2 C788.3 833.3 788.0 835.4 787.6 837.5 C787.3 839.5 786.9 841.6 786.6 843.6 C786.2 845.7 785.8 847.7 785.4 849.7 C785.0 851.8 784.6 853.8 784.2 855.8 C783.7 857.9 783.3 859.9 782.8 861.9 C782.3 863.9 781.9 865.9 781.4 867.9 C780.9 869.9 780.3 871.9 779.8 873.8 C779.3 875.8 778.7 877.8 778.2 879.8 C777.6 881.7 777.0 883.7 776.4 885.7 C775.8 887.6 775.2 889.6 774.6 891.5 C774.0 893.5 773.3 895.4 772.7 897.3 C772.0 899.3 771.3 901.2 770.6 903.1 C770.0 905.1 769.3 907.0 768.5 908.9 C767.8 910.8 767.1 912.7 766.3 914.6 C765.6 916.5 764.8 918.4 764.1 920.3 C763.3 922.2 762.5 924.1 761.7 926.0 C760.9 927.8 760.0 929.7 759.2 931.6 C758.4 933.5 757.5 935.3 756.6 937.2 C755.7 939.0 754.9 940.9 753.9 942.8 C753.0 944.6 752.1 946.4 751.2 948.3 C750.2 950.1 749.3 952.0 748.3 953.8 C747.3 955.6 746.3 957.4 745.3 959.2 C744.3 961.1 743.3 962.9 742.3 964.7 C741.2 966.5 740.1 968.3 739.1 970.1 C738.0 971.9 736.9 973.6 735.8 975.4 C734.6 977.2 733.5 979.0 732.4 980.7 C731.2 982.5 730.0 984.3 728.8 986.0 C727.6 987.8 726.4 989.5 725.2 991.2 C724.0 993.0 722.7 994.7 721.4 996.4 C720.2 998.2 718.9 999.9 717.6 1001.6 C716.2 1003.3 714.9 1005.0 713.6 1006.6 C712.2 1008.3 710.8 1010.0 709.4 1011.7 C708.0 1013.3 706.6 1015.0 705.2 1016.6 C703.7 1018.3 702.3 1019.9 700.8 1021.5 C699.3 1023.1 697.8 1024.8 696.3 1026.3 C694.8 1027.9 693.2 1029.5 691.7 1031.1 C690.1 1032.7 688.5 1034.2 686.9 1035.8 C685.3 1037.3 683.6 1038.9 682.0 1040.4 C680.3 1041.9 678.6 1043.4 676.9 1044.9 C675.2 1046.3 673.5 1047.8 671.8 1049.3 C670.0 1050.7 668.2 1052.1 666.5 1053.6 C664.7 1055.0 662.9 1056.4 661.0 1057.7 C659.2 1059.1 657.3 1060.5 655.4 1061.8 C653.6 1063.2 651.7 1064.5 649.7 1065.8 C647.8 1067.0 645.9 1068.3 643.9 1069.6 C641.9 1070.8 639.9 1072.0 637.9 1073.2 C635.9 1074.4 633.9 1075.6 631.8 1076.7 C629.7 1077.9 627.7 1079.0 625.6 1080.1 C623.5 1081.2 621.3 1082.3 619.2 1083.3 C617.1 1084.3 614.9 1085.3 612.7 1086.3 C610.6 1087.3 608.4 1088.2 606.1 1089.1 C603.9 1090.0 601.7 1090.9 599.4 1091.7 C597.2 1092.6 594.9 1093.4 592.6 1094.1 C590.3 1094.9 588.0 1095.6 585.7 1096.3 C583.4 1097.0 581.1 1097.7 578.7 1098.3 C576.4 1098.9 574.0 1099.5 571.6 1100.0 C569.3 1100.6 566.9 1101.1 564.5 1101.5 C562.1 1102.0 559.7 1102.4 557.3 1102.8 C554.9 1103.1 552.4 1103.5 550.0 1103.8 C547.6 1104.0 545.1 1104.3 542.7 1104.5 C540.2 1104.7 537.8 1104.8 535.3 1104.9 C532.9 1105.0 530.4 1105.1 528.0 1105.1 C525.5 1105.1 523.0 1105.1 520.6 1105.0 C518.1 1104.9 515.6 1104.8 513.2 1104.6 C510.7 1104.4 508.3 1104.2 505.8 1103.9 C503.4 1103.6 500.9 1103.3 498.5 1103.0 C496.0 1102.6 493.6 1102.2 491.2 1101.7 C488.8 1101.2 486.3 1100.7 483.9 1100.2 C481.5 1099.6 479.1 1099.0 476.8 1098.3 C474.4 1097.7 472.0 1097.0 469.7 1096.2 C467.3 1095.5 465.0 1094.7 462.6 1093.8 C460.3 1093.0 458.0 1092.1 455.7 1091.2 C453.5 1090.3 451.2 1089.3 448.9 1088.3 C446.7 1087.2 444.5 1086.2 442.3 1085.1 C440.1 1084.0 437.9 1082.8 435.7 1081.6 C433.6 1080.5 431.4 1079.2 429.3 1078.0 C427.2 1076.7 425.2 1075.4 423.1 1074.1 C421.0 1072.7 419.0 1071.3 417.0 1069.9 C415.0 1068.5 413.0 1067.1 411.1 1065.6 C409.2 1064.1 407.2 1062.6 405.4 1061.0 C403.5 1059.5 401.6 1057.9 399.8 1056.3 C398.0 1054.7 396.2 1053.1 394.4 1051.4 C392.6 1049.7 390.9 1048.0 389.2 1046.3 C387.5 1044.6 385.8 1042.9 384.2 1041.1 C382.5 1039.3 380.9 1037.6 379.3 1035.7 C377.8 1033.9 376.2 1032.1 374.7 1030.3 C373.2 1028.4 371.7 1026.5 370.2 1024.7 C368.8 1022.8 367.4 1020.9 366.0 1018.9 C364.6 1017.0 363.2 1015.1 361.9 1013.1 C360.5 1011.2 359.2 1009.2 358.0 1007.2 C356.7 1005.3 355.4 1003.3 354.2 1001.3 C353.0 999.3 351.8 997.3 350.7 995.2 C349.5 993.2 348.4 991.2 347.3 989.1 C346.2 987.1 345.1 985.1 344.1 983.0 C343.0 981.0 342.0 978.9 341.0 976.8 C340.0 974.8 339.1 972.7 338.1 970.6 C337.2 968.5 336.3 966.4 335.4 964.4 C334.5 962.3 333.7 960.2 332.8 958.1 C332.0 956.0 331.2 953.9 330.4 951.8 C329.6 949.7 328.9 947.6 328.1 945.5 C327.4 943.4 326.7 941.2 326.0 939.1 C325.3 937.0 324.6 934.9 324.0 932.8 C323.4 930.7 322.7 928.6 322.1 926.4 C321.6 924.3 321.0 922.2 320.4 920.1 C319.9 918.0 319.4 915.9 318.8 913.7 C318.3 911.6 317.9 909.5 317.4 907.4 C316.9 905.2 316.5 903.1 316.1 901.0 C315.7 898.9 315.3 896.8 314.9 894.6 C314.5 892.5 314.2 890.4 313.8 888.3 C313.5 886.2 313.2 884.0 312.9 881.9 C312.6 879.8 312.4 877.7 312.1 875.6 C311.9 873.4 311.7 871.3 311.5 869.2 C311.3 867.1 311.1 865.0 311.0 862.9 C310.8 860.7 310.7 858.6 310.6 856.5 C310.5 854.4 310.4 852.3 310.3 850.2 C310.2 848.1 310.2 846.0 310.2 843.9 C310.2 841.8 310.2 839.7 310.2 837.6 C310.2 835.5 310.3 833.4 310.3 831.3 C310.4 829.2 310.5 827.1 310.6 825.0Z" fill="none" stroke="url(#gs)" stroke-width="11.2"/><circle cx="345.1" cy="695.3" r="21.5" fill="#fdfdfe"/><circle cx="345.1" cy="695.3" r="15.4" fill="#4d78df"/><circle cx="762.8" cy="670.3" r="21.5" fill="#fdfdfe"/><circle cx="762.8" cy="670.3" r="15.4" fill="#4a7fdc"/><circle cx="532.0" cy="1107.2" r="21.5" fill="#fdfdfe"/><circle cx="532.0" cy="1107.2" r="15.4" fill="#6e55d9"/></svg>
</body></html>
